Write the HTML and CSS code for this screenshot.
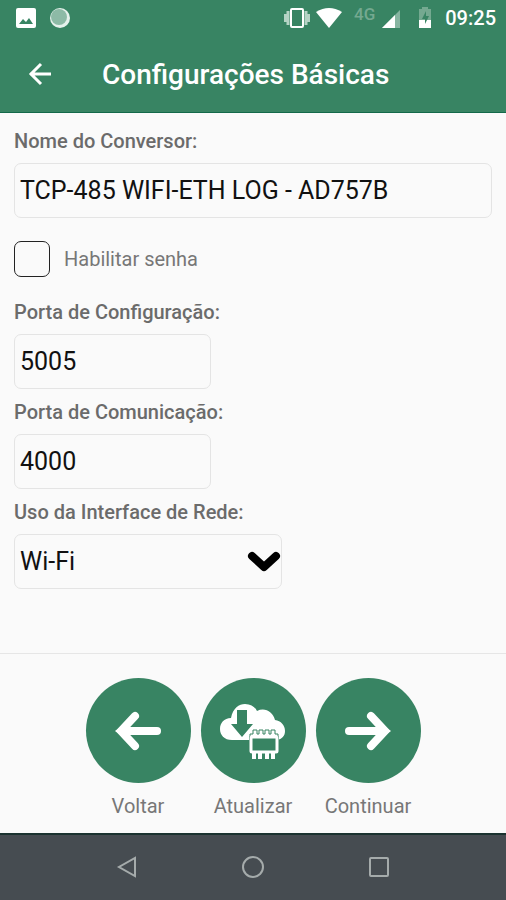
FILE: index.html
```html
<!DOCTYPE html>
<html lang="pt-BR">
<head>
    <meta charset="utf-8">
    <meta name="viewport" content="width=device-width, initial-scale=1">
    <title>Configurações Básicas</title>
    <link rel="stylesheet" href="styles.css">
</head>
<body>
    <header>
        <div class="status">
            <svg width="20" height="20" viewBox="0 0 20 20">
                <rect x="0" y="0" width="20" height="20" rx="2" fill="#fff"/>
                <path d="M3 16l4-5 3 3 3-4 4 6z" fill="#388463"/>
            </svg>
            <svg class="sync" width="20" height="20" viewBox="0 0 20 20">
                <circle cx="10" cy="10" r="10" fill="#e6f1ec"/>
                <circle cx="9" cy="9" r="8" fill="#8dbaa6"/>
            </svg>
            <span class="space"></span>
            <svg width="26" height="22" viewBox="0 0 26 22">
                <path d="M1 7v8M4 4v14M22 4v14M25 7v8" stroke="#b5d3c5" stroke-width="3"/>
                <rect x="7" y="2" width="12" height="18" rx="1" fill="#388463" stroke="#fff" stroke-width="2"/>
            </svg>
            <svg class="wifi" width="26" height="20" viewBox="0 0 26 20">
                <path d="M13 20L0 4q13-8 26 0z" fill="#fff"/>
            </svg>
            <span class="net">4G</span>
            <svg class="signal" width="18" height="18" viewBox="0 0 18 18">
                <path d="M0 18L18 0v18z" fill="#87b5a1"/>
                <path d="M0 18L13 5v13z" fill="#fff"/>
            </svg>
            <svg class="battery" width="14" height="22" viewBox="0 0 14 22">
                <path d="M1 2h3V0h6v2h3v11H1z" fill="#74a990"/>
                <path d="M1 13h12v8H1z" fill="#fff"/>
                <path d="M8 4l-4 8h3v5l4-8H8z" fill="#388463"/>
            </svg>
            <span class="clock">09:25</span>
        </div>
        <div class="bar">
            <a href="#" class="back" aria-label="Voltar">
                <svg width="24" height="24" viewBox="0 0 24 24" fill="none" stroke="#fff" stroke-width="3">
                    <path d="M23 12H2M13 2L3 12l10 10"/>
                </svg>
            </a>
            <h1>Configurações Básicas</h1>
        </div>
    </header>

    <main>
        <form>
            <label for="nome">Nome do Conversor:</label>
            <input type="text" id="nome" name="nome" value="TCP-485 WIFI-ETH LOG - AD757B">

            <div class="senha">
                <input type="checkbox" id="senha" name="senha">
                <label for="senha">Habilitar senha</label>
            </div>

            <label for="porta_config">Porta de Configuração:</label>
            <input type="text" class="porta" id="porta_config" name="porta_config" value="5005">

            <label for="porta_com">Porta de Comunicação:</label>
            <input type="text" class="porta" id="porta_com" name="porta_com" value="4000">

            <label for="interface">Uso da Interface de Rede:</label>
            <div class="rede">
                <select id="interface" name="interface">
                    <option>Wi-Fi</option>
                    <option>Ethernet</option>
                </select>
                <svg width="34" height="22" viewBox="0 0 34 22" fill="none" stroke="#000" stroke-width="8" stroke-linecap="round" stroke-linejoin="round">
                    <path d="M5 5l12 11L29 5"/>
                </svg>
            </div>
        </form>
    </main>

    <div class="actions">
        <button type="button">
            <span class="circle">
                <svg width="46" height="40" viewBox="0 0 46 40" fill="none" stroke="#fff" stroke-width="8">
                    <path d="M8 20h34" stroke-linecap="round"/>
                    <path d="M20 5L6 20l14 15" stroke-linecap="round"/>
                    <path d="M12 12L0 20l12 8z" fill="#fff" stroke="none"/>
                </svg>
            </span>
            Voltar
        </button>
        <button type="button">
            <span class="circle">
                <svg width="66" height="56" viewBox="0 0 66 56">
                    <path d="M12 37C4 37 0 32 0 26c0-6 4-11 11-11C13 5 19 1 25 1c6 0 10 3 12 7 8-4 16 1 18 9 6 1 10 5 10 11 0 5-3 8-8 9z" fill="#fff"/>
                    <path d="M17 7h10v14h6L22 34 11 21h6z" fill="#388463"/>
                    <path d="M30 35v-4h3v-4h4v4h2v-4h4v4h2v-4h4v4h2v-4h4v4h3v5" fill="#fff" stroke="#388463" stroke-width="1"/>
                    <rect x="29" y="33" width="30" height="18" rx="2" fill="#388463"/>
                    <rect x="31" y="34" width="26" height="15" rx="1" fill="#388463" stroke="#fff" stroke-width="3"/>
                    <path d="M34 50v6M40 50v6M47 50v6M53 50v6" stroke="#fff" stroke-width="4"/>
                </svg>
            </span>
            Atualizar
        </button>
        <button type="button">
            <span class="circle">
                <svg width="46" height="40" viewBox="0 0 46 40" fill="none" stroke="#fff" stroke-width="8">
                    <path d="M4 20h34" stroke-linecap="round"/>
                    <path d="M26 5l14 15-14 15" stroke-linecap="round"/>
                    <path d="M34 12l12 8-12 8z" fill="#fff" stroke="none"/>
                </svg>
            </span>
            Continuar
        </button>
    </div>

    <nav>
        <a href="#" aria-label="Voltar">
            <svg width="22" height="22" viewBox="0 0 22 22"><path d="M19 2v18L3 11z"/></svg>
        </a>
        <a href="#" aria-label="Início">
            <svg width="22" height="22" viewBox="0 0 22 22"><circle cx="11" cy="11" r="10"/></svg>
        </a>
        <a href="#" aria-label="Recentes">
            <svg width="22" height="22" viewBox="0 0 22 22"><rect x="2" y="2" width="18" height="18" rx="1"/></svg>
        </a>
    </nav>
</body>
</html>
```

FILE: styles.css
```css
* {
    box-sizing: border-box;
    margin: 0px;
}

body {
    display: flex;
    flex-direction: column;
    min-height: 100vh;
    background: #fafafa;
    color: #6b6b6b;
    font-family: Roboto, "Liberation Sans", sans-serif;
}

svg {
    display: block;
    flex: none;
}

header {
    background: #388463;
    color: #fff;
    border-bottom: 1px solid #14694a;
}

.status {
    display: flex;
    align-items: center;
    height: 36px;
    padding: 0 10px 0 16px;
}

.sync {
    margin-left: 14px;
}

.space {
    flex: 1;
}

.wifi {
    margin-left: 6px;
}

.net {
    margin: 0 7px 8px 12px;
    color: #74a990;
    font-size: 17px;
    font-weight: 500;
}

.signal {
    margin-top: 2px;
}

.battery {
    margin: 0 13px 0 18px;
}

.clock {
    font-size: 20px;
    font-weight: 500;
}

.bar {
    display: flex;
    align-items: center;
    height: 76px;
    padding: 0 28px;
}

h1 {
    margin-left: 50px;
    font-size: 28px;
    font-weight: 500;
}

main {
    flex: 1;
    padding: 16px 14px;
}

label {
    display: block;
    margin-bottom: 10px;
    font-size: 20px;
    line-height: 24px;
    font-weight: 500;
}

input, select {
    display: block;
    width: 100%;
    height: 55px;
    padding: 0 5px;
    border: 1px solid #e4e4e4;
    border-radius: 7px;
    background: #fafafa;
    color: #111;
    font-family: inherit;
    font-size: 25px;
}

.senha {
    display: flex;
    align-items: center;
    gap: 14px;
    margin: 23px 0;
}

.senha input {
    appearance: none;
    width: 36px;
    height: 36px;
    margin: 0;
    border: 1px solid #222;
    border-radius: 7px;
}

.senha input:checked {
    background: #388463;
}

.senha label {
    margin: 0;
    color: #777;
    font-weight: 400;
}

input.porta {
    width: 197px;
    margin-bottom: 11px;
}

.rede {
    position: relative;
    width: 268px;
}

.rede select {
    appearance: none;
}

.rede svg {
    position: absolute;
    right: 1px;
    top: 17px;
    pointer-events: none;
}

.actions {
    display: flex;
    justify-content: center;
    gap: 10px;
    padding: 24px 0 15px;
    border-top: 1px solid #e6e6e6;
}

.actions button {
    width: 105px;
    padding: 0;
    border: none;
    background: none;
    color: #777;
    font-family: inherit;
    font-size: 20px;
    line-height: 24px;
}

.circle {
    display: flex;
    align-items: center;
    justify-content: center;
    height: 105px;
    margin-bottom: 11px;
    border-radius: 50%;
    background: #388463;
}

nav {
    display: flex;
    justify-content: center;
    gap: 104px;
    height: 67px;
    padding-top: 21px;
    border-top: 2px solid #1b3330;
    background: #464c51;
}

nav svg {
    fill: none;
    stroke: #a5abab;
    stroke-width: 2;
}
```
